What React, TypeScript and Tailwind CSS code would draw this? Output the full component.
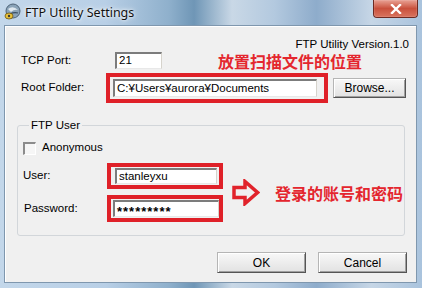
import React from "react";

const ui = { fontFamily: '"Liberation Sans", Arial, sans-serif' };
const cjk = { fontFamily: '"Noto Sans CJK SC", "Noto Sans", sans-serif' };

function Field({ value, className, bold }: { value: string; className: string; bold?: boolean }) {
  return (
    <div
      className={`flex items-center bg-white border-t-2 border-l-2 border-t-[#7c7c7c] border-l-[#7c7c7c] border-r border-b border-r-[#d6d3cc] border-b-[#e8e8e8] pl-[2px] text-[11.5px] text-black leading-none ${className}`}
      style={ui}
    >
      <span className={bold ? "font-bold tracking-[1px] text-[13px] mt-[4px]" : ""}>{value}</span>
    </div>
  );
}

function Btn({ label, className }: { label: string; className: string }) {
  return (
    <button
      className={`flex items-center justify-center text-[12px] text-black bg-gradient-to-b from-[#f8f8f8] to-[#e2e2e2] border border-t-[#b5b5b5] border-l-[#b5b5b5] border-r-[#555] border-b-[#555] shadow-[inset_1px_1px_0_#fff,inset_-1px_-1px_0_#a0a0a0] ${className}`}
      style={ui}
    >
      {label}
    </button>
  );
}

function TitleIcon() {
  return (
    <svg width="18" height="18" viewBox="0 0 18 18">
      <circle cx="10" cy="8" r="7" fill="#8aa3b8" stroke="#4f6478" strokeWidth="1" />
      <path d="M5 6 Q10 2 15 7 Q11 6 8 9 Z" fill="#dfe8ef" />
      <path d="M7 11 Q11 9 15 10" stroke="#3a4f63" strokeWidth="1.2" fill="none" />
      <ellipse cx="6" cy="13" rx="4" ry="3" fill="#e8c23a" stroke="#6b5410" strokeWidth="0.8" />
      <circle cx="6" cy="13" r="1.2" fill="#3a3a3a" />
    </svg>
  );
}

export default function App() {
  return (
    <div className="w-[422px] h-[288px] flex flex-col bg-[linear-gradient(90deg,#c3d7ea_0%,#b8cfe6_25%,#8fb0cc_40%,#6f96b6_46%,#c9d8e6_55%,#b3c9df_65%,#8eaccb_75%,#c6d6e6_88%,#a9c3dd_100%)] overflow-hidden">
      {/* title bar */}
      <div className="h-[25px] flex items-start shrink-0">
        <div className="ml-[3px] mt-[3px]">
          <TitleIcon />
        </div>
        <div
          className="ml-[4px] mt-[4px] text-[12.5px] text-[#111] [text-shadow:0_0_6px_#fff,0_0_3px_#fff]"
          style={{ fontFamily: '"Noto Sans", "Open Sans", sans-serif' }}
        >
          FTP Utility Settings
        </div>
        <div className="ml-auto mr-[4px] w-[45px] h-[18px] rounded-b-[4px] border border-t-0 border-[#6e2a22] bg-gradient-to-b from-[#e8a194] via-[#c9503c] to-[#d9735e] flex items-center justify-center shadow-[inset_0_0_1px_#fff]">
          <svg width="12" height="10" viewBox="0 0 12 10">
            <path d="M2 1 L10 9 M10 1 L2 9" stroke="#fff" strokeWidth="2.4" strokeLinecap="square" />
          </svg>
        </div>
      </div>

      {/* frame body */}
      <div className="flex-1 flex pl-[4px] pr-[5px] pb-[5px]">
        <div className="flex-1 flex flex-col bg-[#f0f0f0] border border-[#7f97ae] shadow-[inset_1px_1px_0_#fff]" style={ui}>
          {/* version */}
          <div className="flex justify-end pr-[7px] pt-[11px] h-[26px] text-[11.5px] leading-[14px] text-black">
            FTP Utility Version.1.0
          </div>

          {/* TCP port */}
          <div className="flex items-start pl-[16px] h-[21px]">
            <div className="w-[94px] h-[17px] flex items-center text-[11.5px] text-black">TCP Port:</div>
            <Field value="21" className="w-[47px] h-[17px]" />
            <div className="ml-[56px] -mt-[2px] text-[16px] leading-[22px] font-bold text-[#e4262e]" style={cjk}>
              放置扫描文件的位置
            </div>
          </div>

          {/* Root folder */}
          <div className="flex items-center pl-[16px] h-[30px]">
            <div className="w-[85px] text-[11.5px] text-black">Root Folder:</div>
            <div className="w-[222px] h-[30px] border-4 border-[#df2028] flex items-center pl-[3px]">
              <Field value="C:¥Users¥aurora¥Documents" className="w-[204px] h-[18px]" />
            </div>
            <Btn label="Browse..." className="ml-[5px] w-[73px] h-[20px]" />
          </div>

          {/* FTP User group */}
          <fieldset className="ml-[12px] mt-[15px] w-[388px] h-[118px] border border-[#d2d6da] rounded-[3px] pl-[5px] pt-[9px]">
            <legend className="ml-[6px] px-[2px] text-[11.5px] leading-[14px] text-black">FTP User</legend>
            <div className="flex items-center h-[14px]">
              <div className="w-[13px] h-[13px] bg-[#f6f6f6] border-t-2 border-l-2 border-t-[#8c8c8c] border-l-[#8c8c8c] border-r border-b border-r-[#fff] border-b-[#fff]" />
              <span className="ml-[6px] text-[11.5px] text-black">Anonymous</span>
            </div>
            <div className="flex items-center mt-[8px]">
              <div className="flex flex-col gap-[6px]">
                <div className="flex items-center">
                  <div className="w-[84px] text-[11.5px] text-black">User:</div>
                  <div className="w-[116px] h-[26px] border-4 border-[#df2028] flex items-center pl-[4px]">
                    <Field value="stanleyxu" className="w-[102px] h-[16px]" />
                  </div>
                </div>
                <div className="flex items-center">
                  <div className="w-[84px] pl-[1px] text-[11.5px] text-black">Password:</div>
                  <div className="w-[116px] h-[27px] border-4 border-[#df2028] flex items-center pl-[2px]">
                    <Field value="*********" bold className="w-[106px] h-[17px]" />
                  </div>
                </div>
              </div>
              <svg className="ml-[9px]" width="28" height="27" viewBox="0 0 28 27">
                <path d="M2 8.5 H13 V2.5 L25.5 13.5 L13 24.5 V18.5 H2 Z" fill="none" stroke="#e1232b" strokeWidth="3.5" strokeLinejoin="miter" />
              </svg>
              <div className="ml-[15px] text-[16px] leading-[20px] font-bold text-[#e4262e]" style={cjk}>
                登录的账号和密码
              </div>
            </div>
          </fieldset>

          {/* buttons */}
          <div className="flex justify-end gap-[12px] pr-[9px] mt-[16px]">
            <Btn label="OK" className="w-[89px] h-[21px]" />
            <Btn label="Cancel" className="w-[89px] h-[21px]" />
          </div>
        </div>
      </div>
    </div>
  );
}
